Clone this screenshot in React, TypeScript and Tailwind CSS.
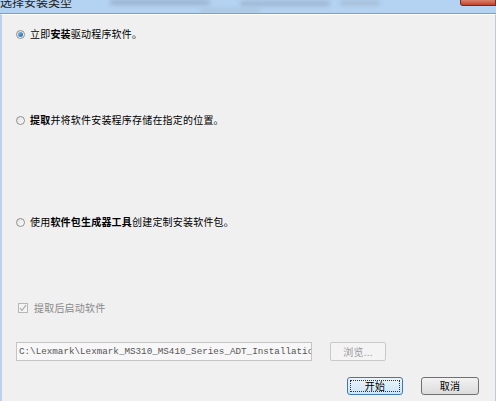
import React from 'react';

const cjk = { fontFamily: '"Noto Sans CJK SC", "Liberation Sans", sans-serif' };

const Radio: React.FC<{ checked?: boolean }> = ({ checked }) => (
    <span className="w-[9px] h-[9px] rounded-full border border-[#8e8f8f] bg-linear-to-br from-[#e2e2e2] to-[#fbfbfb] flex items-center justify-center shrink-0">
        {checked && <span className="w-[5px] h-[5px] rounded-full bg-linear-to-br from-[#7fc0ed] to-[#1a5fa8]" />}
    </span>
);

const App: React.FC = () => {
    return (
        <div className="w-[496px] h-[401px] flex flex-col bg-[#f0f0f0] overflow-hidden relative text-black" style={cjk}>
            {/* title bar */}
            <div className="h-[14px] shrink-0 bg-[#b4d2f1] border-b border-[#8d9cab] relative overflow-hidden">
                <span className="absolute left-0 -top-[5px] text-[12px] leading-[14px] text-[#1b1b1b]">选择安装类型</span>
                <span className="absolute left-[110px] top-[0px] w-[100px] h-[5px] rounded-full bg-[#98b2cf] blur-[2px]" />
                <span className="absolute left-[240px] top-[1px] w-[90px] h-[5px] rounded-full bg-[#9db6d2] blur-[2px]" />
                <span className="absolute left-[340px] top-[1px] w-[40px] h-[4px] rounded-full bg-[#a4bbd4] blur-[2px]" />
                <span className="absolute left-[200px] top-[9px] w-[60px] h-[3px] rounded-full bg-[#a9c1da] blur-[2px]" />
                <span className="absolute right-0 top-0 w-[36px] h-[6px] rounded-bl-[3px] bg-linear-to-b from-[#d9806a] to-[#c2412a] border border-t-0 border-[#7a2a1c]" />
            </div>

            <div className="flex-1 flex border-l-2 border-l-[#bcd2ea] border-r border-r-[#b9cbe0] border-t border-t-white">
                <div className="flex-1 flex flex-col pl-[14px] pr-[14px] text-[10px] leading-[12px] tracking-[0.2px]">
                    <label className="flex items-center gap-[5px] mt-[13px]">
                        <Radio checked />
                        <span>立即<b>安装</b>驱动程序软件。</span>
                    </label>

                    <label className="flex items-center gap-[5px] mt-[74px]">
                        <Radio />
                        <span><b>提取</b>并将软件安装程序存储在指定的位置。</span>
                    </label>

                    <label className="flex items-center gap-[5px] mt-[90px]">
                        <Radio />
                        <span>使用<b>软件包生成器工具</b>创建定制安装软件包。</span>
                    </label>

                    <label className="flex items-center gap-[6px] mt-[74px] ml-[2px] text-[#8a8a8a]">
                        <span className="w-[10px] h-[10px] border border-[#b6b6b6] bg-[#f4f4f4] flex items-center justify-center">
                            <svg width="8" height="8" viewBox="0 0 8 8">
                                <path d="M1 4.2 L3 6.3 L7 1.2" fill="none" stroke="#a9a9a9" strokeWidth="1.2" />
                            </svg>
                        </span>
                        <span>提取后启动软件</span>
                    </label>

                    <div className="flex items-center mt-[28px]">
                        <div className="w-[296px] h-[19px] border border-[#c4c4c4] bg-[#f7f7f7] overflow-hidden whitespace-nowrap px-[2px] text-[9.25px] leading-[17px] tracking-normal text-[#555]" style={{ fontFamily: '"Liberation Mono", monospace' }}>
                            C:\Lexmark\Lexmark_MS310_MS410_Series_ADT_Installation
                        </div>
                        <button className="ml-[18px] w-[56px] h-[19px] border border-[#c9c9c9] rounded-[2px] bg-[#f4f4f4] text-[#9a9a9a] text-[10px] leading-[17px]">
                            浏览...
                        </button>
                    </div>

                    <div className="flex justify-end mt-[16px] gap-[18px] pr-[2px]">
                        <button className="w-[56px] h-[18px] rounded-[3px] border border-[#3d7bad] bg-linear-to-b from-[#e9f4fb] to-[#cde6f6] p-[2px]">
                            <span className="block w-full h-full border border-dotted border-[#333] text-[10px] leading-[10px]">开始</span>
                        </button>
                        <button className="w-[58px] h-[18px] rounded-[3px] border border-[#707070] bg-linear-to-b from-[#f2f2f2] to-[#dcdcdc] text-[10px] leading-[16px]">
                            取消
                        </button>
                    </div>
                </div>
            </div>
        </div>
    );
};

export default App;
